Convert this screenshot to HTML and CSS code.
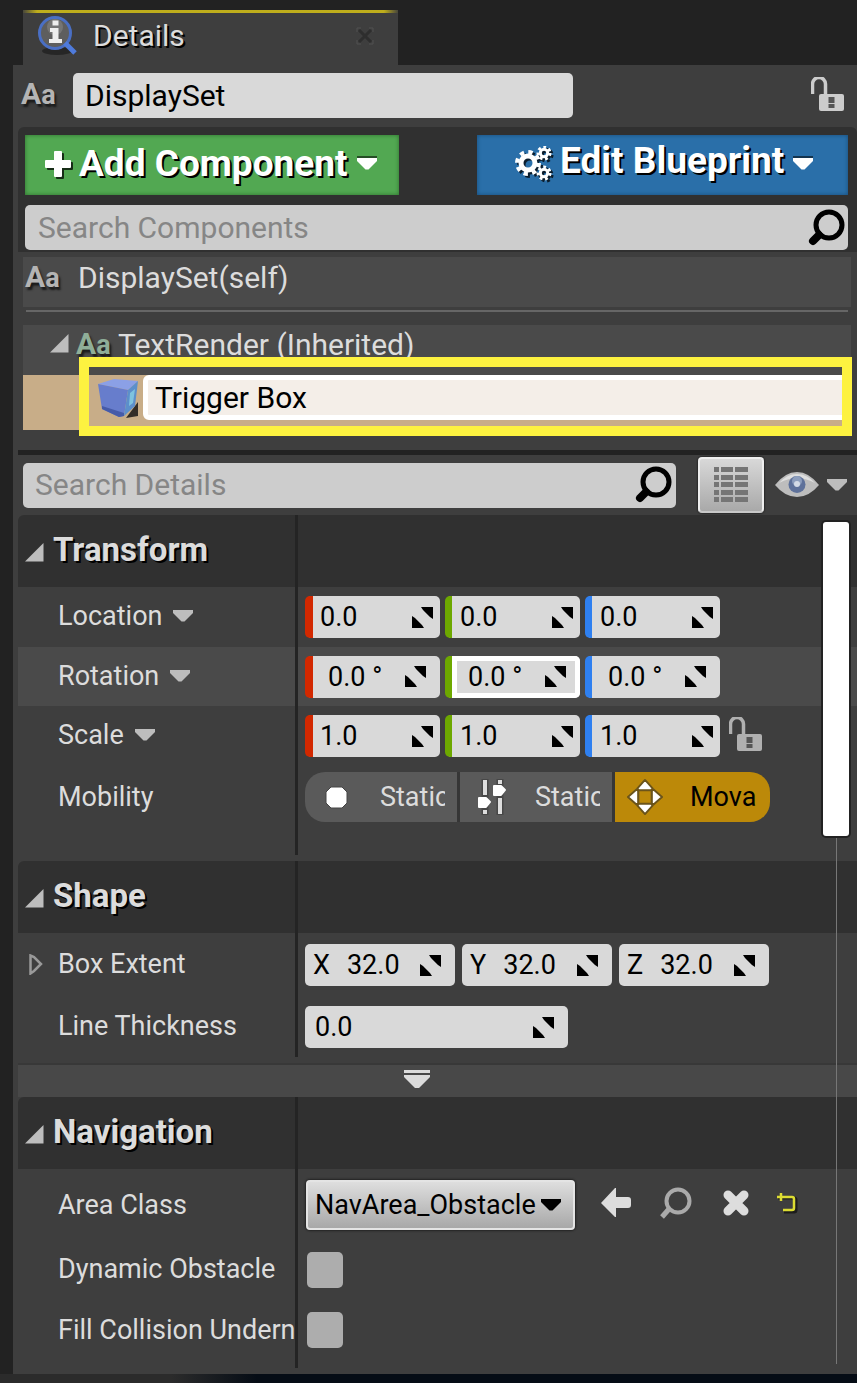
FILE: index.html
```html
<!DOCTYPE html>
<html lang="en">
<head>
<meta charset="utf-8">
<title>Details</title>
<link rel="stylesheet" href="styles.css">
</head>
<body>
<svg class="defs" aria-hidden="true">
  <defs>
    <symbol id="caret" viewBox="0 0 20 12"><path d="M0 0h20v3l-8.500 8.500h-3L0 3z"/></symbol>
    <symbol id="drag" viewBox="0 0 21 21"><path d="M9 0h12v12l-3-2-7-7zM0 9v12h12l-2-3-7-7z"/></symbol>
    <symbol id="open" viewBox="0 0 19 19"><path d="M18.500 0v18.500H0z"/></symbol>
    <symbol id="search" viewBox="0 0 38 38"><circle cx="21" cy="16" r="13" fill="none" stroke="currentColor" stroke-width="5"/><path d="M11 26 5 32" stroke="currentColor" stroke-width="8" stroke-linecap="round"/></symbol>
    <symbol id="lock" viewBox="0 0 34 38"><path d="M2.500 19V9a6.500 6.500 0 0 1 13 0v10" fill="none" stroke="currentColor" stroke-width="3.500" transform="translate(-1 -2)"/><rect x="8" y="17" width="25" height="17" rx="2" fill="currentColor"/><path d="M17.500 20h6v6h-6zm0 7h6v4h-6z" fill="#555"/></symbol>
  </defs>
</svg>
<div class="window">
  <header class="tab">
    <svg class="tab-icon" viewBox="0 0 42 42" aria-hidden="true">
      <ellipse cx="20" cy="36" rx="15" ry="4" fill="#1d1d1d" opacity=".7"/>
      <circle cx="18" cy="18" r="15.500" fill="#5e5e5e" stroke="#4a6fc4" stroke-width="3"/>
      <circle cx="18" cy="12" r="8" fill="#858585" opacity=".6"/>
      <path d="m28 28 10 10" stroke="#4f7bdc" stroke-width="5"/>
      <path d="M15.500 5.500h6v5h-6zM13 13h8.500v11H25v4H12v-4h3.500v-7H13z" fill="#eee"/>
    </svg>
    <h1>Details</h1>
    <button class="tab-close" aria-label="Close tab"><svg viewBox="0 0 18 18"><path d="m3 3 12 12M15 3 3 15" stroke="#2e2e2e" stroke-width="3"/><path d="M1 5V1h4M13 1h4v4M17 13v4h-4M5 17H1v-4" stroke="#505050" fill="none"/></svg></button>
  </header>
  <main class="panel">
    <div class="name-row">
      <span class="aa" aria-hidden="true">A<small>a</small></span>
      <input class="box name" type="text" value="DisplaySet" aria-label="Actor name">
      <button class="lock" aria-label="Lock"><svg><use href="#lock"/></svg></button>
    </div>
    <section class="components">
      <div class="actions">
        <button class="action add"><svg class="plus" viewBox="0 0 26 26"><path d="M9 1q0-1 1-1h6q1 0 1 1v8h8q1 0 1 1v6q0 1-1 1h-8v8q0 1-1 1h-6q-1 0-1-1v-8H1q-1 0-1-1v-6q0-1 1-1h8z"/></svg><span>Add Component</span><svg class="caret"><use href="#caret"/></svg></button>
        <button class="action edit">
          <svg class="gears" viewBox="0 0 38 36"><g fill="none" stroke="#fff"><circle cx="13" cy="17" r="7" stroke-width="5"/><circle cx="13" cy="17" r="11" stroke-width="4" stroke-dasharray="4.320"/><circle cx="29" cy="7" r="3.700" stroke-width="3"/><circle cx="29" cy="7" r="6" stroke-width="3" stroke-dasharray="2.690"/><circle cx="29" cy="27" r="3.700" stroke-width="3"/><circle cx="29" cy="27" r="6" stroke-width="3" stroke-dasharray="2.690"/></g></svg><span>Edit Blueprint</span><svg class="caret"><use href="#caret"/></svg></button>
      </div>
      <label class="box search"><input type="search" placeholder="Search Components" aria-label="Search components"><svg><use href="#search"/></svg></label>
    </section>
    <section class="tree">
      <div class="node self"><span class="aa" aria-hidden="true">A<small>a</small></span><span>DisplaySet(self)</span></div>
      <hr>
      <div class="node parent"><svg class="open"><use href="#open"/></svg><span class="aa green" aria-hidden="true">A<small>a</small></span><span>TextRender (Inherited)</span></div>
      <div class="node child">
        <svg class="cube" viewBox="0 0 40 40" aria-hidden="true"><path d="m28 40 12-16v14z" fill="#332d27"/><path d="M0 6 16 1l24 2-10 9z" fill="#8ba0e6"/><path d="m0 6 30 6-4 26-5 1L4 31z" fill="#677dcc"/><path d="m30 12 10-9-3 25-11 10z" fill="#5c8fcb"/><path d="m32 15 5-4-2 14-4 3z" fill="#7ec3df"/><path d="m4 28 22 7v3l-5 1L4 31z" fill="#465ba8"/></svg>
        <input class="rename" type="text" value="Trigger Box" aria-label="Component name">
        <div class="highlight"></div>
      </div>
    </section>
    <div class="filter">
      <label class="box search"><input type="search" placeholder="Search Details" aria-label="Search details"><svg><use href="#search"/></svg></label>
      <button class="matrix" aria-label="Property matrix"><svg viewBox="0 0 34 36"><path d="M0 0h5v5H0zm7 0h12v5H7zm14 0h13v5H21zM0 8h5v5H0zm7 0h12v5H7zm14 0h13v5H21zM0 15h5v5H0zm7 0h12v5H7zm14 0h13v5H21zM0 23h5v5H0zm7 0h12v5H7zm14 0h13v5H21zM0 30h5v5H0zm7 0h12v5H7zm14 0h13v5H21z" fill="#757575"/></svg></button>
      <button class="view" aria-label="View options"><svg class="eye" viewBox="0 0 44 26"><path d="M0 13Q10 0 22 0t22 13Q34 25 22 25T0 13" fill="#bdbdbd"/><path d="M4 11Q12 2 22 2t18 9q-10-5-18-5T4 11" fill="#dedede"/><circle cx="22" cy="12.500" r="8.500" fill="#5e719a"/><circle cx="22" cy="9" r="5" fill="#8c9dbc"/><circle cx="22" cy="12" r="3" fill="#d3dae6"/></svg><svg class="caret"><use href="#caret"/></svg></button>
    </div>
    <div class="details">
      <section class="category">
        <div class="row head"><h2><svg class="open"><use href="#open"/></svg>Transform</h2><div class="value"></div></div>
        <div class="row"><div class="label">Location<svg class="caret"><use href="#caret"/></svg></div><div class="value axes">
          <label class="box num red"><input type="text" value="0.0" aria-label="Location X"><svg><use href="#drag"/></svg></label>
          <label class="box num green"><input type="text" value="0.0" aria-label="Location Y"><svg><use href="#drag"/></svg></label>
          <label class="box num blue"><input type="text" value="0.0" aria-label="Location Z"><svg><use href="#drag"/></svg></label></div></div>
        <div class="row hover"><div class="label">Rotation<svg class="caret"><use href="#caret"/></svg></div><div class="value axes">
          <label class="box num red angle"><input type="text" value="0.0 °" aria-label="Rotation X"><svg><use href="#drag"/></svg></label>
          <label class="box num green angle active"><input type="text" value="0.0 °" aria-label="Rotation Y"><svg><use href="#drag"/></svg></label>
          <label class="box num blue angle"><input type="text" value="0.0 °" aria-label="Rotation Z"><svg><use href="#drag"/></svg></label></div></div>
        <div class="row"><div class="label">Scale<svg class="caret"><use href="#caret"/></svg></div><div class="value axes">
          <label class="box num red"><input type="text" value="1.0" aria-label="Scale X"><svg><use href="#drag"/></svg></label>
          <label class="box num green"><input type="text" value="1.0" aria-label="Scale Y"><svg><use href="#drag"/></svg></label>
          <label class="box num blue"><input type="text" value="1.0" aria-label="Scale Z"><svg><use href="#drag"/></svg></label>
          <button class="lock scale-lock" aria-label="Preserve scale ratio"><svg><use href="#lock"/></svg></button></div></div>
        <div class="row mobility-row"><div class="label">Mobility</div><div class="value">
          <div class="mobility" role="radiogroup" aria-label="Mobility">
            <label><input type="radio" name="mobility"><svg viewBox="0 0 36 38"><path d="M12 9h11l5 5v11l-5 5H12l-5-5V14z" fill="#fff" stroke="#444" stroke-linejoin="round"/></svg><span>Static</span></label>
            <label><input type="radio" name="mobility"><svg viewBox="0 0 36 38"><path d="M11 1v36M26 1v36" stroke="#474747" stroke-width="7"/><path d="M11 2v15M11 32v4M26 2v4M26 20v16" stroke="#ddd" stroke-width="4"/><path d="M5 20h7l4 4-4 5H5zM20 8h7l4 4-4 5h-7z" fill="#fff" stroke="#fff" stroke-width="2" stroke-linejoin="round"/></svg><span>Stationary</span></label>
            <label class="on"><input type="radio" name="mobility" checked><svg viewBox="0 0 38 38"><g fill="#fff" stroke="#6b541b" stroke-width="2" stroke-linejoin="round"><path d="m19 1 8 9v2H11v-2zM19 37l8-9v-2H11v2zM1 19l9-8h2v16h-2zM37 19l-9-8h-2v16h2z"/></g><path d="M12 12h14v14H12z" fill="#bc8909" stroke="#6b541b" stroke-width="2"/></svg><span>Movable</span></label>
          </div></div></div>
      </section>
      <section class="category">
        <div class="row head"><h2><svg class="open"><use href="#open"/></svg>Shape</h2><div class="value"></div></div>
        <div class="row tall"><div class="label"><svg class="closed" viewBox="0 0 14 21"><path d="M1.500 1.500v18L5 17l7-7-7-7z" fill="none" stroke="#999" stroke-width="2.500"/></svg>Box Extent</div><div class="value extent">
          <label class="box num"><span>X</span><input type="text" value="32.0"><svg><use href="#drag"/></svg></label>
          <label class="box num"><span>Y</span><input type="text" value="32.0"><svg><use href="#drag"/></svg></label>
          <label class="box num"><span>Z</span><input type="text" value="32.0"><svg><use href="#drag"/></svg></label></div></div>
        <div class="row"><label class="label" for="thickness">Line Thickness</label><div class="value"><div class="box num wide"><input id="thickness" type="text" value="0.0"><svg><use href="#drag"/></svg></div></div></div>
      </section>
      <button class="advanced" aria-label="Show advanced"><svg viewBox="0 0 26 18"><path d="M0 0h26v3H0zM0 5h26v2L15 18h-4L0 7z" fill="#dcdcdc"/></svg></button>
      <section class="category">
        <div class="row head"><h2><svg class="open"><use href="#open"/></svg>Navigation</h2><div class="value"></div></div>
        <div class="row area"><label class="label" for="area">Area Class</label><div class="value">
          <div class="select"><select id="area"><option>NavArea_Obstacle</option></select><svg class="caret"><use href="#caret"/></svg></div>
          <div class="tools">
          <button aria-label="Use selected"><svg viewBox="0 0 32 32"><path d="M1 16 15 1h1v9h12q3 0 3 3v5q0 3-3 3H16v9h-1z" fill="#ddd"/></svg></button>
          <button aria-label="Browse"><svg viewBox="0 0 32 32"><circle cx="18" cy="14" r="11.500" fill="none" stroke="#aaa" stroke-width="4"/><path d="m9 22-7 8" stroke="#aaa" stroke-width="5"/></svg></button>
          <button aria-label="Clear"><svg viewBox="0 0 32 32"><path d="m8 8 16 16M24 8 8 24" stroke="#ddd" stroke-width="9" stroke-linecap="round"/></svg></button>
          <button class="reset" aria-label="Reset to default"><svg viewBox="0 0 22 22"><path d="M2 6h16q2 0 2 2v10q0 2-2 2H8" fill="none" stroke="#1c1c1c" stroke-width="3"/><path d="M1 5h15q2 0 2 2v9q0 2-2 2H7M5 1v8" fill="none" stroke="#dcdc32" stroke-width="2.500"/></svg></button></div></div></div>
        <div class="row"><label class="label" for="dynamic">Dynamic Obstacle</label><div class="value"><input class="check" id="dynamic" type="checkbox"></div></div>
        <div class="row last"><label class="label" for="fill">Fill Collision Underneath</label><div class="value"><input class="check" id="fill" type="checkbox"></div></div>
      </section>
      <div class="scroll"><div class="thumb"></div></div>
    </div>
  </main>
  <footer></footer>
</div>
</body>
</html>
```
FILE: styles.css
```css
* { box-sizing: border-box; }
body { margin: 0; background: #222; color: #dcdcdc; font: 30px/36px Roboto, sans-serif; }
button, input, select { font: inherit; color: inherit; border: 0; padding: 0; margin: 0; background: none; }
button, select { cursor: pointer; }
input { outline: 0; min-width: 0; }
svg { display: block; flex: none; }
.defs { position: absolute; width: 0; height: 0; }
h1, h2 { margin: 0; }
.window { padding-top: 10px; }

.tab { width: 375px; height: 55px; margin-left: 23px; padding: 0 24px 6px 14px; display: flex; align-items: center; background: #3e3e3e; border-top: 3px solid; border-image: linear-gradient(90deg, #3e3e3e, #bfae1c 4%, #bfae1c 96%, #3e3e3e) 1; }
.tab-icon { width: 42px; height: 42px; }
.tab h1 { flex: 1; margin-left: 14px; font-size: 30px; font-weight: 400; text-shadow: 2px 2px #000; }
.tab-close svg { width: 18px; height: 18px; }

.panel { margin-left: 13px; padding: 8px 0 0 5px; background: #3e3e3e; }
.box { background: #d9d9d9; color: #000; border-radius: 5px; }
.aa { flex: none; width: 38px; padding-bottom: 2px; color: #b4b4b4; font: bold 30px/32px Roboto, sans-serif; text-shadow: 2px 3px 2px #1b1b1b; }
.aa small { font-size: 27px; }
.aa.green { color: #8fae98; }
.caret { width: 20px; height: 12px; fill: #bdbdbd; }
.open { width: 19px; height: 19px; fill: #bdbdbd; }

.name-row { display: flex; align-items: center; padding: 0 12px 9px 3px; }
.name { width: 500px; height: 45px; margin: 0 auto 0 14px; padding: 0 12px; }
.lock { color: #ccc; }
.lock svg { width: 34px; height: 38px; }

.components { padding: 8px 9px 2px 7px; background: #303030; border-radius: 6px 6px 0 0; }
.actions { display: flex; justify-content: space-between; margin-bottom: 10px; }
.action { display: flex; align-items: center; height: 60px; color: #fff; font-size: 37px; font-weight: 700; text-shadow: 2px 2px #000; }
.action svg { fill: #fff; filter: drop-shadow(2px 2px 0 #000b); }
.action .caret { filter: drop-shadow(0 -2px 0 #0008); }
.add { width: 374px; padding: 0 22px 2px 20px; background: #52a852; box-shadow: inset 0 0 4px #2c6e2c; }
.add .plus { width: 26px; height: 26px; }
.add span { margin: 0 auto 0 8px; }
.edit { width: 371px; padding: 0 35px 2px 38px; background: #2a6fa9; box-shadow: inset 0 0 4px #174c78; }
.edit .gears { width: 38px; height: 36px; }
.edit span { margin: 0 auto 6px 7px; }
.search { display: flex; align-items: center; height: 45px; background: #cdcdcd; padding: 0 2px 0 13px; }
.search input { flex: 1; appearance: none; }
.search input::placeholder { color: #868686; opacity: 1; }
.search svg { width: 38px; height: 38px; color: #000; }

.tree { padding: 5px 6px 20px 5px; }
.node { display: flex; align-items: center; height: 50px; background: #4a4a4a; }
.self { padding: 0 2px 8px; }
.self .aa { width: 53px; }
.tree hr { height: 2px; margin: 3px 3px 13px; border: 0; background: #666; }
.parent { padding: 0 0 10px 27px; }
.parent .open { margin: 0 7px 4px 0; }
.parent .aa { width: 42px; }
.child { position: relative; height: 55px; padding: 0 0 10px 75px; background: #c8ad88; }
.cube { width: 40px; height: 40px; }
.rename { flex: 1; height: 45px; margin-left: 5px; padding: 0 7px; color: #000; background: #f4eee8; border: 5px solid #fff; border-radius: 6px; }
.highlight { position: absolute; top: -18px; bottom: -6px; left: 56px; right: -1px; border: 10px solid #fdf240; pointer-events: none; }

.filter { display: flex; align-items: center; border-top: 5px solid #222; padding: 2px 10px 2px 5px; }
.filter .search { flex: 1; margin-right: 22px; padding: 0 3px 0 12px; }
.matrix { display: grid; place-items: center; width: 66px; height: 56px; border: 2px solid #eee; border-bottom-color: #c8c8c8; border-radius: 4px; background: linear-gradient(#d8d8d8, #a9a9a9); box-shadow: 0 0 2px #000; }
.matrix svg { width: 34px; height: 36px; }
.view { display: flex; align-items: center; gap: 8px; margin-left: 11px; }
.eye { width: 44px; height: 26px; }

.details { position: relative; font-size: 27px; }
.row { display: grid; grid-template-columns: 277px minmax(0, 1fr); height: 60px; }
.row.head { height: 72px; background: #303030; border-radius: 6px 0 0 0; }
.row.hover { height: 59px; background: #4a4a4a; }
.row.tall { height: 64px; }
.category { padding-bottom: 6px; }
h2 { display: flex; align-items: center; gap: 9px; padding: 0 0 2px 7px; font-size: 33px; text-shadow: 2px 2px #000; }
h2 .open { margin-top: 4px; }
.label { position: relative; display: flex; align-items: center; gap: 11px; padding: 0 0 2px 40px; white-space: nowrap; overflow: hidden; }
.value { display: flex; align-items: center; padding-left: 7px; border-left: 3px solid #242424; }
.axes { gap: 5px; }
.extent { gap: 7px; }
.num { display: flex; align-items: center; width: 135px; height: 42px; padding-right: 7px; overflow: hidden; }
.num input { flex: 1; width: 0; padding-left: 7px; }
.num svg { width: 21px; height: 21px; }
.red { border-left: 8px solid #d22800; }
.green.num { border-left: 7px solid #6da800; }
.blue { border-left: 7px solid #2f80f0; }
.green input, .blue input { padding-left: 8px; }
.angle { padding: 0 14px 0 8px; }
.active { box-shadow: inset 0 0 0 5px #fff; }
.extent .num { width: 150px; padding: 0 14px 0 8px; }
.extent .num input { padding-left: 17px; }
.wide { width: 263px; padding: 0 14px 0 3px; }
.scale-lock { margin-left: 4px; color: #b0b0b0; }
.mobility-row { height: 89px; }
.mobility-row .label, .mobility-row .value { padding-bottom: 27px; }
.mobility { display: flex; border-radius: 20px; overflow: hidden; }
.mobility label { display: flex; align-items: center; width: 155px; height: 50px; padding: 0 12px 0 14px; background: #5a5a5a; border-right: 3px solid #363636; cursor: pointer; }
.mobility label.on { background: #bc8909; color: #000; border: 0; padding: 0 14px 0 12px; }
.mobility input { appearance: none; position: absolute; }
.mobility svg { width: 36px; height: 38px; }
.mobility span { flex: 1; margin-left: 25px; overflow: hidden; white-space: nowrap; }
.mobility .on span { margin-left: 27px; }
.closed { position: absolute; left: 11px; width: 14px; height: 21px; }
.advanced { display: flex; justify-content: center; align-items: center; width: 100%; height: 34px; padding: 0 41px 4px 0; background: #484848; border-top: 2px solid #383838; }
.advanced svg { width: 26px; height: 18px; }
.area.row { height: 71px; }
.area .label { padding-bottom: 0; }
.area .value { padding-left: 8px; }
.select { position: relative; margin-right: 25px; }
.select select { appearance: none; width: 269px; height: 50px; padding-left: 7px; color: #000; background: linear-gradient(#dedede, #a8a8a8); border: 2px solid #e4e4e4; border-radius: 4px; box-shadow: 0 0 2px 1px #222; }
.select .caret { position: absolute; right: 14px; top: 19px; fill: #000; pointer-events: none; }
.tools { display: flex; align-items: center; gap: 28px; padding-bottom: 4px; }
.tools svg { width: 32px; height: 32px; }
.tools .reset svg { width: 22px; height: 22px; }
.tools .reset { margin-left: -4px; }
.check { appearance: none; width: 36px; height: 36px; margin-left: 2px; border-radius: 5px; background: #adadad; }
.row.last { height: 68px; }
.last .label, .last .value { padding-bottom: 8px; }
.scroll { position: absolute; top: 7px; bottom: 10px; right: 8px; width: 26px; pointer-events: none; background: linear-gradient(#777, #777) 13px 0 / 1px 100% no-repeat; }
.thumb { height: 314px; background: #fff; border-radius: 3px; box-shadow: 0 0 0 2px #222; }
footer { height: 9px; background: linear-gradient(90deg, #2b2b2b 20%, #050c15 30%); }
```
